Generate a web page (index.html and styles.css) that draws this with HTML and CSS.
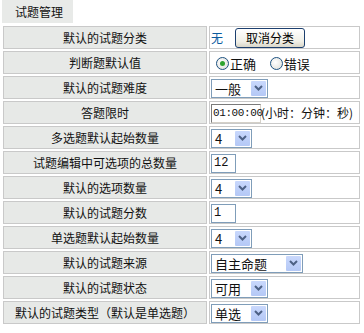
FILE: index.html
```html
<!DOCTYPE html>
<html lang="zh-CN">
<head>
    <meta charset="UTF-8">
    <title>试题管理</title>
    <link rel="stylesheet" href="styles.css">
</head>
<body>
    <div class="tab">试题管理</div>
    <table class="settings">
        <tr>
            <td class="label">默认的试题分类</td>
            <td class="value"><span class="none">无</span><button class="btn">取消分类</button></td>
        </tr>
        <tr>
            <td class="label">判断题默认值</td>
            <td class="value">
                <span class="radio checked"></span><span class="rlabel">正确</span>
                <span class="radio"></span><span class="rlabel">错误</span>
            </td>
        </tr>
        <tr>
            <td class="label">默认的试题难度</td>
            <td class="value"><span class="select w57"><span class="sel-text">一般</span><span class="arrow"><svg width="9" height="6" viewBox="0 0 9 6"><path d="M1 1 L4.5 4.5 L8 1" fill="none" stroke="#4d6185" stroke-width="2"/></svg></span></span></td>
        </tr>
        <tr>
            <td class="label">答题限时</td>
            <td class="value"><span class="input inset w50">01:00:00</span><span class="hint">(小时：分钟：秒)</span></td>
        </tr>
        <tr>
            <td class="label">多选题默认起始数量</td>
            <td class="value"><span class="select w41"><span class="sel-text">4</span><span class="arrow"><svg width="9" height="6" viewBox="0 0 9 6"><path d="M1 1 L4.5 4.5 L8 1" fill="none" stroke="#4d6185" stroke-width="2"/></svg></span></span></td>
        </tr>
        <tr>
            <td class="label">试题编辑中可选项的总数量</td>
            <td class="value"><span class="input w25">12</span></td>
        </tr>
        <tr>
            <td class="label">默认的选项数量</td>
            <td class="value"><span class="select w41"><span class="sel-text">4</span><span class="arrow"><svg width="9" height="6" viewBox="0 0 9 6"><path d="M1 1 L4.5 4.5 L8 1" fill="none" stroke="#4d6185" stroke-width="2"/></svg></span></span></td>
        </tr>
        <tr>
            <td class="label">默认的试题分数</td>
            <td class="value"><span class="input w25">1</span></td>
        </tr>
        <tr>
            <td class="label">单选题默认起始数量</td>
            <td class="value"><span class="select w41"><span class="sel-text">4</span><span class="arrow"><svg width="9" height="6" viewBox="0 0 9 6"><path d="M1 1 L4.5 4.5 L8 1" fill="none" stroke="#4d6185" stroke-width="2"/></svg></span></span></td>
        </tr>
        <tr>
            <td class="label">默认的试题来源</td>
            <td class="value"><span class="select w92"><span class="sel-text">自主命题</span><span class="arrow"><svg width="9" height="6" viewBox="0 0 9 6"><path d="M1 1 L4.5 4.5 L8 1" fill="none" stroke="#4d6185" stroke-width="2"/></svg></span></span></td>
        </tr>
        <tr>
            <td class="label">默认的试题状态</td>
            <td class="value"><span class="select w57"><span class="sel-text">可用</span><span class="arrow"><svg width="9" height="6" viewBox="0 0 9 6"><path d="M1 1 L4.5 4.5 L8 1" fill="none" stroke="#4d6185" stroke-width="2"/></svg></span></span></td>
        </tr>
        <tr>
            <td class="label">默认的试题类型（默认是单选题）</td>
            <td class="value"><span class="select w57"><span class="sel-text">单选</span><span class="arrow"><svg width="9" height="6" viewBox="0 0 9 6"><path d="M1 1 L4.5 4.5 L8 1" fill="none" stroke="#4d6185" stroke-width="2"/></svg></span></span></td>
        </tr>
    </table>
</body>
</html>
```

FILE: styles.css
```css
body {
    margin: 0;
    padding: 0;
    background-color: #ffffff;
    font-family: "Noto Sans CJK SC", "DejaVu Sans", sans-serif;
    font-size: 12px;
    color: #111;
}
.tab {
    display: inline-block;
    margin-left: 2px;
    height: 23px;
    line-height: 23px;
    padding: 0 10px 0 13px;
    background-color: #e8eae8;
}
.settings {
    border-collapse: separate;
    border-spacing: 2px;
    table-layout: fixed;
    margin: 1px 0 0 1px;
    width: 361px;
}
.settings td {
    border: 1px solid #c9c9c9;
    height: 21px;
    padding: 0 1px;
    white-space: nowrap;
}
.label {
    width: 200px;
    background-color: #e7e9e7;
    text-align: center;
}
.value {
    background-color: #ffffff;
}
.none {
    color: #0b5b9e;
    margin-right: 12px;
    vertical-align: middle;
}
.btn {
    font-family: inherit;
    font-size: 12px;
    width: 70px;
    height: 20px;
    padding: 0;
    border: 1px solid #1c3f6e;
    border-radius: 3px;
    background: linear-gradient(#ffffff, #f0efe6 70%, #d9d6c8);
    vertical-align: middle;
}
.radio {
    display: inline-block;
    width: 11px;
    height: 11px;
    border: 1px solid #1c5180;
    border-radius: 50%;
    background: radial-gradient(circle at 40% 40%, #ffffff, #dcdcd6);
    vertical-align: middle;
    margin: 0 1px 0 5px;
    position: relative;
}
.radio.checked::after {
    content: "";
    position: absolute;
    left: 3px;
    top: 3px;
    width: 5px;
    height: 5px;
    border-radius: 50%;
    background-color: #2ea32e;
}
.rlabel {
    vertical-align: middle;
    margin-right: 6px;
    font-size: 13px;
}
.select {
    display: inline-flex;
    align-items: center;
    justify-content: space-between;
    box-sizing: border-box;
    height: 19px;
    border: 1px solid #7f9db9;
    background-color: #fff;
    vertical-align: middle;
    padding: 0 1px 0 3px;
    font-size: 13px;
}
.arrow {
    display: inline-flex;
    align-items: center;
    justify-content: center;
    width: 15px;
    height: 15px;
    border-radius: 1px;
    background: linear-gradient(#c9d8fc, #b4c8f6);
}
.w41 { width: 41px; }
.w57 { width: 57px; }
.w92 { width: 92px; }
.input {
    display: inline-block;
    box-sizing: border-box;
    height: 19px;
    line-height: 17px;
    border: 1px solid #7f9db9;
    padding: 0 2px;
    vertical-align: middle;
    font-family: "Liberation Mono", monospace;
    font-size: 12px;
}
.inset {
    border-color: #7a7a7a #d4d0c8 #d4d0c8 #7a7a7a;
    padding: 0 1px;
    font-size: 11px;
    letter-spacing: -0.4px;
}
.w25 { width: 25px; }
.w50 { width: 50px; }
.hint {
    vertical-align: middle;
}
```
